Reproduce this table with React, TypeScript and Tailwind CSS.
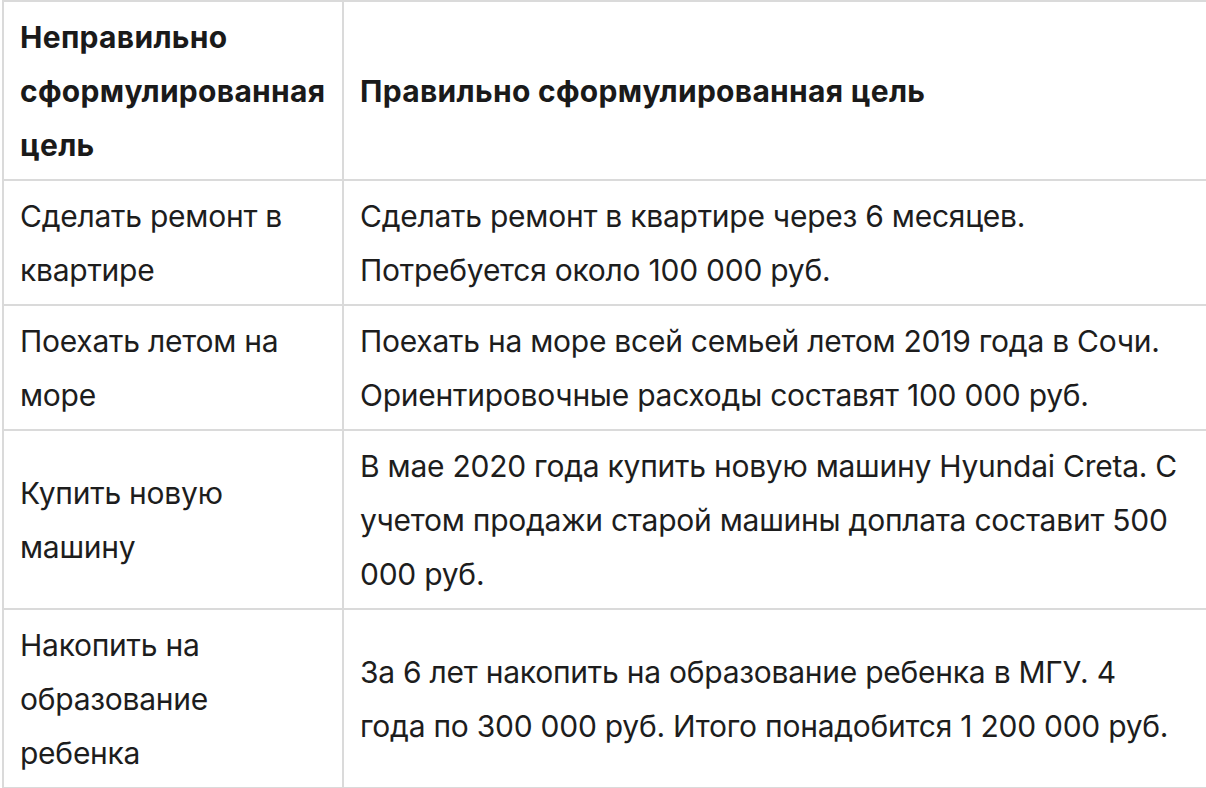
const rows: { wrong: string[]; right: string[] }[] = [
  {
    wrong: ['Сделать ремонт в', 'квартире'],
    right: ['Сделать ремонт в квартире через 6 месяцев.', 'Потребуется около 100 000 руб.'],
  },
  {
    wrong: ['Поехать летом на', 'море'],
    right: [
      'Поехать на море всей семьей летом 2019 года в Сочи.',
      'Ориентировочные расходы составят 100 000 руб.',
    ],
  },
  {
    wrong: ['Купить новую', 'машину'],
    right: [
      'В мае 2020 года купить новую машину Hyundai Creta. С',
      'учетом продажи старой машины доплата составит 500',
      '000 руб.',
    ],
  },
  {
    wrong: ['Накопить на', 'образование', 'ребенка'],
    right: [
      'За 6 лет накопить на образование ребенка в МГУ. 4',
      'года по 300 000 руб. Итого понадобится 1 200 000 руб.',
    ],
  },
];

function Lines({ lines }: { lines: string[] }) {
  return (
    <>
      {lines.map((l, i) => (
        <span key={i} className="block whitespace-nowrap">
          {l}
        </span>
      ))}
    </>
  );
}

const cell = 'border-r-2 border-b-2 border-[#dadada] align-middle pl-4 pr-2 pt-2 pb-[7px]';
const head = 'text-left font-bold tracking-[0.3px] text-[#1a1a1a]';

export default function App() {
  return (
    <div className="min-h-screen bg-white font-['Inter',sans-serif] text-[30px] leading-[54px] tracking-[-0.25px] text-[#1d1d1d]">
      <table className="ml-[2px] w-[1204px] table-fixed border-separate border-spacing-0 border-l-2 border-t-2 border-[#dadada]">
        <colgroup>
          <col className="w-[340px]" />
          <col className="w-[864px]" />
        </colgroup>
        <thead>
          <tr>
            <th className={`${cell} ${head}`}>
              <Lines lines={['Неправильно', 'сформулированная', 'цель']} />
            </th>
            <th className={`${cell} ${head}`}>Правильно сформулированная цель</th>
          </tr>
        </thead>
        <tbody>
          {rows.map((r, i) => (
            <tr key={i}>
              <td className={cell}>
                <Lines lines={r.wrong} />
              </td>
              <td className={cell}>
                <Lines lines={r.right} />
              </td>
            </tr>
          ))}
        </tbody>
      </table>
    </div>
  );
}
